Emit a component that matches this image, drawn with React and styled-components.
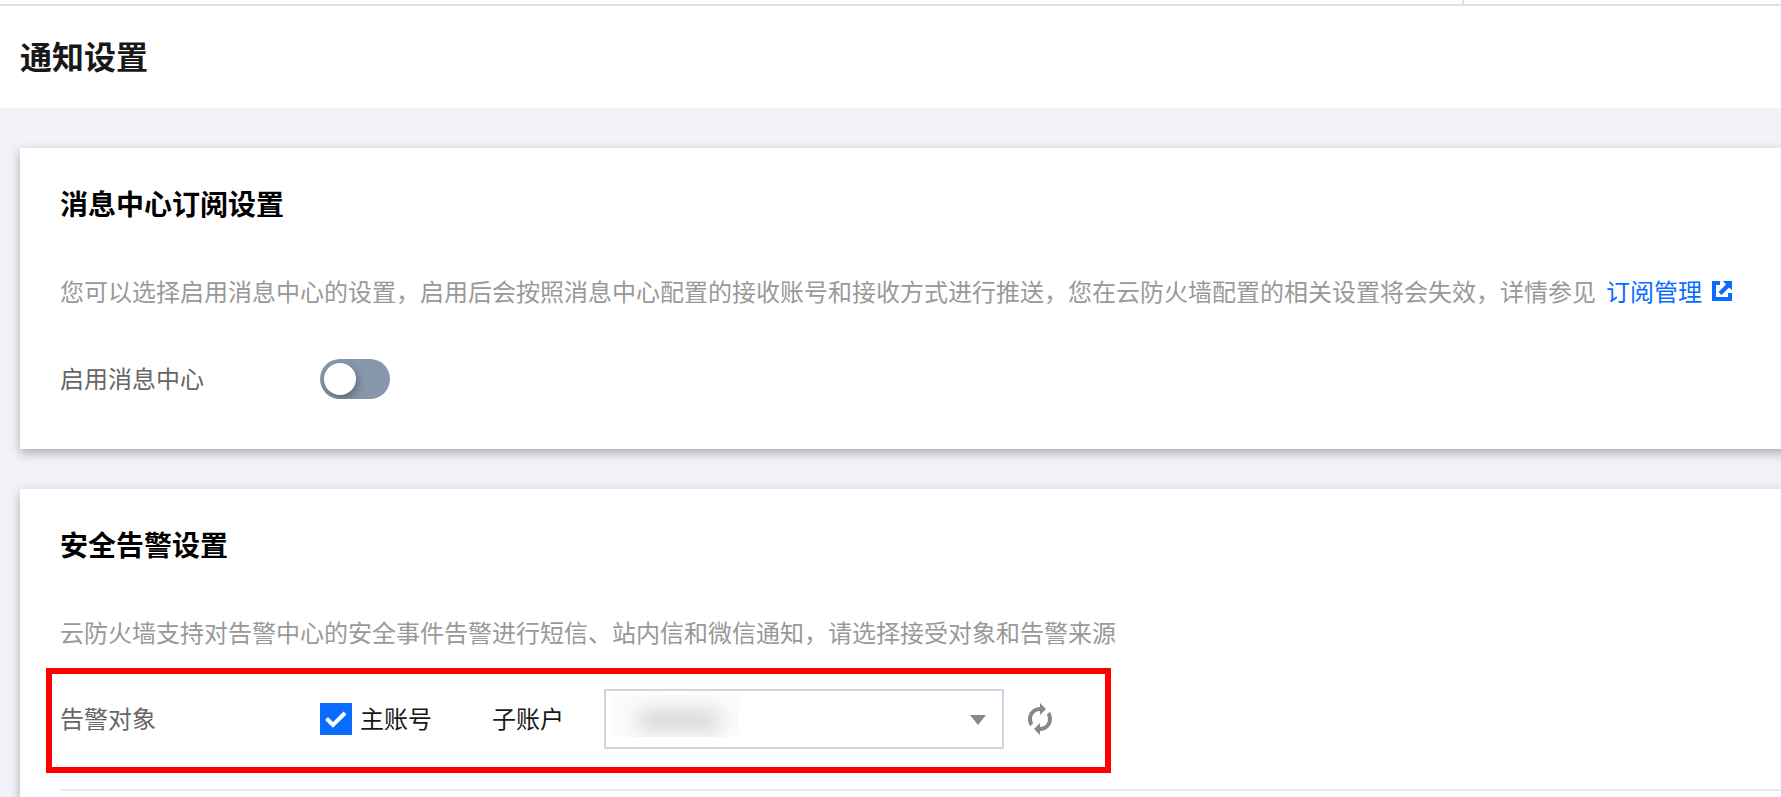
import React from "react";
import styled, { createGlobalStyle } from "styled-components";

const GlobalStyle = createGlobalStyle`
  * { box-sizing: border-box; }
  body {
    margin: 0;
    background: #f2f3f8;
    color: #000;
    font-family: "Noto Sans CJK SC", "Liberation Sans", sans-serif;
    font-size: 24px;
    line-height: 36px;
  }
`;

const Page = styled.div`
  height: 100vh;
  overflow: hidden;
`;

const TopBar = styled.div`
  display: flex;
  height: 6px;
  background: #fff;
  border-bottom: 2px solid #dcdfe8;
`;

const TopBarMain = styled.div`
  flex: 1;
  border-right: 2px solid #dcdfe8;
`;

const TopBarSide = styled.div`
  width: 317px;
`;

const Header = styled.header`
  display: flex;
  align-items: center;
  height: 102px;
  padding: 0 20px 4px;
  background: #fff;
`;

const PageTitle = styled.h1`
  margin: 0;
  font-size: 32px;
  line-height: 48px;
  font-weight: 700;
  color: #181818;
`;

const Content = styled.main`
  display: flex;
  flex-direction: column;
  gap: 40px;
  margin-right: -20px;
  padding: 40px 0 0 20px;
`;

const Card = styled.section`
  padding: 39px 0 50px 40px;
  background: #fff;
  box-shadow: 0 4px 10px rgba(54, 58, 80, 0.38);
`;

const CardTitle = styled.h2`
  margin: 0 0 54px;
  font-size: 28px;
  line-height: 32px;
  font-weight: 700;
`;

const Description = styled.p`
  margin: 0;
  color: #999;
  white-space: nowrap;
`;

const DocLink = styled.a`
  display: inline-flex;
  align-items: center;
  gap: 10px;
  margin-left: 10px;
  color: #0a6cff;
  text-decoration: none;
  vertical-align: top;
`;

const Row = styled.div`
  display: flex;
  align-items: center;
`;

const SwitchRow = styled(Row)`
  margin-top: 50px;
`;

const RowLabel = styled.label`
  width: 260px;
  padding-bottom: 2px;
  color: #666;
`;

const Switch = styled.input`
  appearance: none;
  display: flex;
  align-items: center;
  width: 70px;
  height: 40px;
  margin: 0;
  padding: 4px;
  border-radius: 20px;
  overflow: hidden;
  background: #8797ad;
  cursor: pointer;

  &::before {
    content: "";
    width: 32px;
    height: 32px;
    border-radius: 50%;
    background: #fff;
    box-shadow: 2px 4px 8px rgba(0, 0, 0, 0.3);
  }
  &:checked { justify-content: flex-end; background: #0a6cff; }
`;

const Highlight = styled.div`
  width: fit-content;
  margin: 18px 0 16px -14px;
  padding: 15px 53px 18px 8px;
  border: 6px solid #f00;
`;

const CheckLabel = styled.label`
  display: flex;
  align-items: center;
  gap: 8px;
  margin-right: 60px;
  color: #181818;
`;

const LabelText = styled.span`
  padding-bottom: 2px;
`;

const CheckBox = styled.span`
  display: grid;
  width: 32px;
  height: 32px;

  > * { grid-area: 1 / 1; }
  svg { pointer-events: none; }
`;

const CheckInput = styled.input`
  appearance: none;
  width: 32px;
  height: 32px;
  margin: 0;
  border: 2px solid #cfd5de;
  background: #fff;

  &:checked { border-color: #0a6cff; background: #0a6cff; }
`;

const AccountLabel = styled.label`
  margin-right: 40px;
  padding-bottom: 2px;
  color: #181818;
`;

const SelectWrap = styled.div`
  position: relative;
  width: 400px;
  height: 60px;
`;

const Select = styled.select`
  appearance: none;
  width: 100%;
  height: 100%;
  padding: 0 50px 0 20px;
  border: 2px solid #cfd5e0;
  border-radius: 0;
  background: #fff;
  font: inherit;
`;

const Caret = styled.svg`
  position: absolute;
  top: 26px;
  right: 18px;
  pointer-events: none;
`;

const MaskedValue = styled.span`
  position: absolute;
  top: 6px;
  left: 9px;
  width: 126px;
  height: 42px;
  overflow: hidden;
  background: #fbfbfb;
  pointer-events: none;

  &::before {
    content: "";
    position: absolute;
    inset: 16px 18px 7px 24px;
    border-radius: 10px;
    background: #d2d2d2;
    filter: blur(10px);
  }
`;

const IconButton = styled.button`
  display: flex;
  margin: 0 0 0 24px;
  padding: 0;
  border: 0;
  background: none;
  cursor: pointer;
`;

const Divider = styled.hr`
  height: 2px;
  margin: 0;
  border: 0;
  background: #e6eaf0;
`;

const ExternalIcon = () => (
  <svg width="20" height="20" viewBox="0 0 20 20" fill="#0a6cff" aria-hidden="true">
    <path d="M0 0H8V4H4V16H16V12H20V20H0Z" />
    <path d="M11 0H20V9L17 6.500L9.500 14L6.500 11L14 3.500Z" />
  </svg>
);

const RefreshIcon = () => (
  <svg width="24" height="32" viewBox="0 0 24 32" fill="#888" aria-hidden="true">
    <path d="M12 0L18 6L12 12V8C7.500 8 4 11.500 4 16C4 17.500 4.400 19 5.200 20.200L2.200 23.200C.7 21 0 18.600 0 16C0 9.500 5.500 4 12 4Z" />
    <path d="M12 32L6 26L12 20V24C16.500 24 20 20.500 20 16C20 14.500 19.600 13 18.800 11.800L21.800 8.800C23.300 11 24 13.400 24 16C24 22.500 18.500 28 12 28Z" />
  </svg>
);

export default function App() {
  return (
    <Page lang="zh-CN">
      <GlobalStyle />
      <TopBar>
        <TopBarMain />
        <TopBarSide />
      </TopBar>
      <Header>
        <PageTitle>通知设置</PageTitle>
      </Header>
      <Content>
        <Card>
          <CardTitle>消息中心订阅设置</CardTitle>
          <Description>
            您可以选择启用消息中心的设置，启用后会按照消息中心配置的接收账号和接收方式进行推送，您在云防火墙配置的相关设置将会失效，详情参见
            <DocLink href="#subscription">
              订阅管理
              <ExternalIcon />
            </DocLink>
          </Description>
          <SwitchRow>
            <RowLabel htmlFor="message-center">启用消息中心</RowLabel>
            <Switch id="message-center" type="checkbox" role="switch" />
          </SwitchRow>
        </Card>
        <Card>
          <CardTitle>安全告警设置</CardTitle>
          <Description>云防火墙支持对告警中心的安全事件告警进行短信、站内信和微信通知，请选择接受对象和告警来源</Description>
          <Highlight>
            <Row>
              <RowLabel as="span">告警对象</RowLabel>
              <CheckLabel>
                <CheckBox>
                  <CheckInput type="checkbox" defaultChecked />
                  <svg width="32" height="32" viewBox="0 0 32 32" fill="none" stroke="#fff" strokeWidth="4" aria-hidden="true">
                    <path d="M6.500 15.500L13 22L25 10" />
                  </svg>
                </CheckBox>
                <LabelText>主账号</LabelText>
              </CheckLabel>
              <AccountLabel htmlFor="sub-account">子账户</AccountLabel>
              <SelectWrap>
                <Select id="sub-account" defaultValue="">
                  <option value="" />
                </Select>
                <MaskedValue />
                <Caret width="16" height="10" viewBox="0 0 16 10" fill="#888" aria-hidden="true">
                  <path d="M0 0H16L8 10Z" />
                </Caret>
              </SelectWrap>
              <IconButton type="button" aria-label="刷新">
                <RefreshIcon />
              </IconButton>
            </Row>
          </Highlight>
          <Divider />
        </Card>
      </Content>
    </Page>
  );
}
